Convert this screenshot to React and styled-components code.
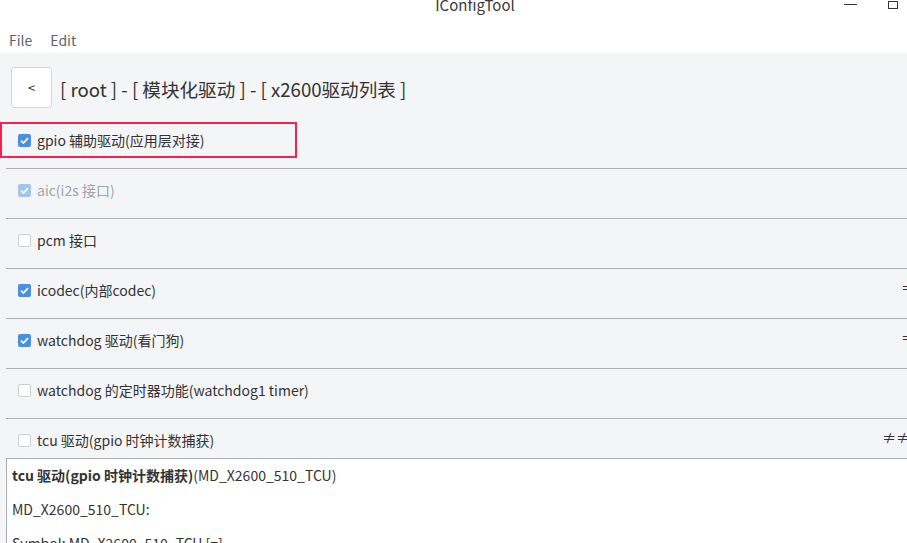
import React from 'react';
import styled, { createGlobalStyle } from 'styled-components';

const GlobalStyle = createGlobalStyle`
  html, body {
    margin: 0;
    padding: 0;
    background: #f4f5f7;
  }
  body {
    font-family: "Noto Sans CJK SC", "Noto Sans", sans-serif;
    color: #333;
  }
`;

const Window = styled.div`
  width: 907px;
  height: 543px;
  overflow: hidden;
  display: flex;
  flex-direction: column;
  background: #f4f5f7;
`;

const TitleBar = styled.div`
  height: 22px;
  flex: none;
  background: #fff;
  position: relative;
  display: flex;
  justify-content: center;
  overflow: hidden;
`;

const Title = styled.div`
  font-size: 15px;
  line-height: 20px;
  margin-top: -5px;
  margin-left: 43px;
  color: #3a3a3a;
`;

const WinButtons = styled.div`
  position: absolute;
  right: 9px;
  top: 1px;
  display: flex;
  align-items: flex-start;
  gap: 31px;
`;

const MenuBar = styled.div`
  height: 31px;
  box-sizing: border-box;
  padding-top: 4px;
  flex: none;
  background: #fff;
  display: flex;
  align-items: center;
  padding-left: 9px;
  gap: 18px;
  font-size: 14px;
  color: #5c6370;
`;

const Header = styled.div`
  display: flex;
  align-items: center;
  gap: 8px;
  padding: 14px 0 11px 11px;
`;

const BackButton = styled.button`
  width: 41px;
  height: 41px;
  background: #fff;
  border: 1px solid #d3d4d6;
  border-radius: 3px;
  font-family: inherit;
  font-size: 13px;
  color: #333;
  padding: 0;
`;

const Crumbs = styled.div`
  font-size: 18.6px;
  color: #333;
  padding-top: 1px;
`;

const List = styled.div`
  display: flex;
  flex-direction: column;
`;

const Row = styled.div`
  margin-left: 6px;
  padding-top: 3px;
  padding-bottom: ${p => (p.last ? '0' : '10px')};
  border-bottom: ${p => (p.last ? 'none' : '1px solid #aeaeae')};
  display: flex;
  align-items: center;
  justify-content: space-between;
`;

const Item = styled.label`
  height: 36px;
  box-sizing: border-box;
  margin-left: -6px;
  width: ${p => (p.focused ? '297px' : 'auto')};
  border: 2px solid ${p => (p.focused ? '#f5214f' : 'transparent')};
  padding-left: 16px;
  padding-right: 16px;
  display: flex;
  align-items: center;
  gap: 6px;
  font-size: 14px;
  color: ${p => (p.disabled ? '#a2a4a8' : '#333')};
`;

const Box = styled.span`
  width: 13px;
  height: 13px;
  box-sizing: border-box;
  border-radius: 2px;
  flex: none;
  display: flex;
  align-items: center;
  justify-content: center;
  background: ${p => (p.checked ? (p.disabled ? '#a3c4ec' : '#4a8fe0') : '#fff')};
  border: 1px solid ${p => (p.checked ? 'transparent' : '#c9ccd1')};
`;

const Value = styled.span`
  font-size: 14px;
  color: #333;
  margin-right: ${p => p.shift}px;
  margin-top: -6px;
`;

const Splitter = styled.div`
  height: 5px;
  background-image: radial-gradient(#e4e5e8 0.6px, transparent 0.8px);
  background-size: 3px 3px;
`;

const Details = styled.div`
  flex: 1;
  margin-left: 6px;
  background: #fff;
  border-top: 1px solid #a9adb3;
  border-left: 1px solid #a9adb3;
  padding: 6px 0 0 5px;
  font-size: 14px;
  color: #333;
`;

const Line = styled.p`
  margin: 0 0 14px;
  line-height: 20px;
`;

const Strong = styled.b`
  font-weight: 700;
`;

function Check({ checked, disabled }) {
  return (
    <Box checked={checked} disabled={disabled}>
      {checked && (
        <svg width="9" height="7" viewBox="0 0 9 7">
          <path d="M1 3.6 L3.4 6 L8 1.2" fill="none" stroke="#fff" strokeWidth="1.7" />
        </svg>
      )}
    </Box>
  );
}

const drivers = [
  { label: 'gpio 辅助驱动(应用层对接)', checked: true, focused: true },
  { label: 'aic(i2s 接口)', checked: true, disabled: true },
  { label: 'pcm 接口' },
  { label: 'icodec(内部codec)', checked: true, value: '=', shift: -3 },
  { label: 'watchdog 驱动(看门狗)', checked: true, value: '=', shift: -3 },
  { label: 'watchdog 的定时器功能(watchdog1 timer)' },
  { label: 'tcu 驱动(gpio 时钟计数捕获)', value: '≠≠', shift: -3 },
];

export default function App() {
  return (
    <Window>
      <GlobalStyle />
      <TitleBar>
        <Title>IConfigTool</Title>
        <WinButtons>
          <svg width="13" height="8" viewBox="0 0 13 8">
            <path d="M0 3.5 H13" stroke="#333" strokeWidth="1" />
          </svg>
          <svg width="10" height="8" viewBox="0 0 10 8">
            <rect x="0.5" y="0.5" width="9" height="7" fill="none" stroke="#333" strokeWidth="1" />
          </svg>
        </WinButtons>
      </TitleBar>
      <MenuBar>
        <span>File</span>
        <span>Edit</span>
      </MenuBar>
      <Header>
        <BackButton>&lt;</BackButton>
        <Crumbs>[ root ] - [ 模块化驱动 ] - [ x2600驱动列表 ]</Crumbs>
      </Header>
      <List>
        {drivers.map((d, i) => (
          <Row key={d.label} last={i === drivers.length - 1}>
            <Item focused={d.focused} disabled={d.disabled}>
              <Check checked={d.checked} disabled={d.disabled} />
              {d.label}
            </Item>
            {d.value && <Value shift={d.shift}>{d.value}</Value>}
          </Row>
        ))}
      </List>
      <Splitter />
      <Details>
        <Line>
          <Strong>tcu 驱动(gpio 时钟计数捕获)</Strong>(MD_X2600_510_TCU)
        </Line>
        <Line>MD_X2600_510_TCU:</Line>
        <Line>Symbol: MD_X2600_510_TCU [=]</Line>
      </Details>
    </Window>
  );
}
